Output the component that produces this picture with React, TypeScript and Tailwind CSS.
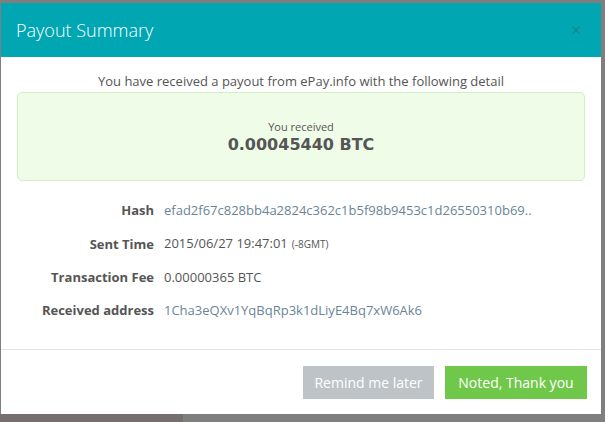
export default function App() {
  const rows = [
    { label: "Hash", value: "efad2f67c828bb4a2824c362c1b5f98b9453c1d26550310b69..", link: true },
    { label: "Sent Time", value: "2015/06/27 19:47:01", note: "(-8GMT)" },
    { label: "Transaction Fee", value: "0.00000365 BTC" },
    { label: "Received address", value: "1Cha3eQXv1YqBqRp3k1dLiyE4Bq7xW6Ak6", link: true },
  ];

  return (
    <div className="w-[605px] h-[422px] bg-[#7f7f7f] flex flex-col overflow-hidden font-['Open_Sans',sans-serif]">
      <div className="mt-[3px] ml-[1px] w-[600px] h-[411px] bg-white flex flex-col">
        {/* header */}
        <div className="h-[54px] bg-[#00a6b1] flex items-center justify-between pl-[15px] pr-[20px]">
          <h2 className="text-[18px] font-light text-white pt-[1px]">Payout Summary</h2>
          <button type="button" className="text-[#227f87] text-[16px] leading-none">
            ×
          </button>
        </div>

        {/* body */}
        <div className="flex-1 px-[16px] pt-[15px]">
          <p className="text-center text-[13px] text-[#555] leading-[18px]">
            You have received a payout from ePay.info with the following detail
          </p>
          <div className="mt-[2px] h-[89px] rounded-[5px] border border-[#d4ecc8] bg-[#effce8] flex flex-col items-center justify-center pt-[2px]">
            <div className="text-[11px] text-[#555] leading-[14px]">You received</div>
            <div className="text-[16px] font-bold text-[#555] leading-[22px] font-['DejaVu_Sans',sans-serif]">
              0.00045440 BTC
            </div>
          </div>

          <div className="mt-[20px] flex flex-col gap-[15px]">
            {rows.map((r) => (
              <div key={r.label} className="flex items-center leading-[18px] text-[13px]">
                <div className="w-[137px] text-right font-bold text-[#555]">{r.label}</div>
                <div className={`ml-[10px] ${r.link ? "text-[#6a8597]" : "text-[#555]"}`}>
                  {r.value}
                  {r.note && <span className="text-[10px] ml-[4px]">{r.note}</span>}
                </div>
              </div>
            ))}
          </div>
        </div>

        {/* footer */}
        <div className="h-[65px] border-t border-[#e5e5e5] flex items-start justify-end gap-[11px] pt-[16px] pr-[14px]">
          <button type="button" className="h-[33px] w-[131px] bg-[#bdc3c7] text-white text-[14px]">
            Remind me later
          </button>
          <button type="button" className="h-[33px] w-[142px] bg-[#6fc84a] text-white text-[14px]">
            Noted, Thank you
          </button>
        </div>
      </div>
      <div className="flex-1 flex">
        <div className="w-[183px] bg-[#776f6f]" />
      </div>
    </div>
  );
}
